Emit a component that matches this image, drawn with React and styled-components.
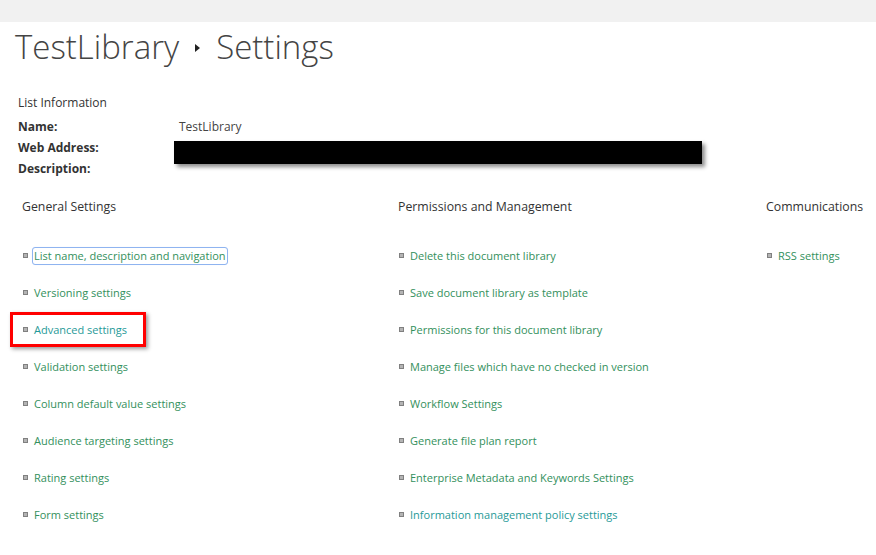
import React from 'react'
import styled, { createGlobalStyle } from "styled-components";

const GlobalStyle = createGlobalStyle`
body {
  margin: 0;
  background: #fff;
  font-family: "Open Sans", "Noto Sans", sans-serif;
  color: #444;
}
`;

const Page = styled.div`
width: 876px;
height: 555px;
overflow: hidden;
`;

const TopBar = styled.div`
height: 22px;
background: #f1f1f1;
`;

const TitleRow = styled.h1`
display: flex;
align-items: center;
gap: 16px;
margin: 0;
padding: 0 0 0 15px;
height: 48px;
font-weight: 300;
font-size: 33px;
color: #444;
`;

const Arrow = styled.span`
width: 0;
height: 0;
border-top: 4px solid transparent;
border-bottom: 4px solid transparent;
border-left: 5px solid #222;
margin-top: 4px;
`;

const Info = styled.div`
padding: 24px 0 0 18px;
font-size: 12px;
`;

const InfoTitle = styled.div`
height: 24px;
line-height: 17px;
color: #333;
`;

const InfoRow = styled.div`
display: grid;
grid-template-columns: 161px 1fr;
height: 21px;
line-height: 17px;
`;

const Label = styled.span`
font-weight: 700;
color: #333;
`;

const Value = styled.span`
color: #444;
`;

const Redacted = styled.div`
width: 528px;
height: 23px;
margin: 2px 0 0 -5px;
background: #000;
box-shadow: 3px 3px 4px rgba(0, 0, 0, 0.45);
`;

const Columns = styled.div`
display: grid;
grid-template-columns: 376px 368px 1fr;
padding: 17px 0 0 22px;
`;

const Column = styled.div`
display: flex;
flex-direction: column;
`;

const Heading = styled.div`
font-size: 12.3px;
line-height: 17px;
color: #333;
height: 39px;
white-space: nowrap;
`;

const Item = styled.div`
position: relative;
display: flex;
align-items: center;
height: 37px;
gap: 4px;
`;

const Bullet = styled.span`
width: 3px;
height: 3px;
margin-left: 1px;
background: #b4b4b4;
border: 1px solid #808080;
`;

const Link = styled.a`
font-size: 11px;
line-height: 16px;
color: ${p => (p.$teal ? "#1f9a98" : "#33905c")};
text-decoration: none;
white-space: nowrap;
padding: 0 1px;
margin-left: 1px;
border-radius: 2px;
outline: ${p => (p.$focus ? "1px solid #8fb4f0" : "none")};
box-shadow: ${p => (p.$focus ? "0 0 2px #bcd4fb" : "none")};
`;

const Highlight = styled.div`
position: absolute;
left: -12px;
top: 1px;
width: 130px;
height: 29px;
border: 3px solid #f00;
box-shadow: 2px 2px 4px rgba(0, 0, 0, 0.4);
pointer-events: none;
`;

const columns = [
  {
    title: "General Settings",
    items: [
      { text: "List name, description and navigation", focus: true },
      { text: "Versioning settings" },
      { text: "Advanced settings", teal: true, marked: true },
      { text: "Validation settings" },
      { text: "Column default value settings" },
      { text: "Audience targeting settings" },
      { text: "Rating settings" },
      { text: "Form settings" },
    ],
  },
  {
    title: "Permissions and Management",
    items: [
      { text: "Delete this document library" },
      { text: "Save document library as template" },
      { text: "Permissions for this document library" },
      { text: "Manage files which have no checked in version" },
      { text: "Workflow Settings" },
      { text: "Generate file plan report" },
      { text: "Enterprise Metadata and Keywords Settings" },
      { text: "Information management policy settings", teal: true },
    ],
  },
  {
    title: "Communications",
    items: [{ text: "RSS settings" }],
  },
];

const App = () => {
  return (
    <Page>
      <GlobalStyle />
      <TopBar />
      <TitleRow>
        TestLibrary
        <Arrow />
        Settings
      </TitleRow>
      <Info>
        <InfoTitle>List Information</InfoTitle>
        <InfoRow>
          <Label>Name:</Label>
          <Value>TestLibrary</Value>
        </InfoRow>
        <InfoRow>
          <Label>Web Address:</Label>
          <Redacted />
        </InfoRow>
        <InfoRow>
          <Label>Description:</Label>
          <Value />
        </InfoRow>
      </Info>
      <Columns>
        {columns.map(col => (
          <Column key={col.title}>
            <Heading>{col.title}</Heading>
            {col.items.map(item => (
              <Item key={item.text}>
                <Bullet />
                <Link href="#" $teal={item.teal} $focus={item.focus}>
                  {item.text}
                </Link>
                {item.marked && <Highlight />}
              </Item>
            ))}
          </Column>
        ))}
      </Columns>
    </Page>
  )
}

export default App
